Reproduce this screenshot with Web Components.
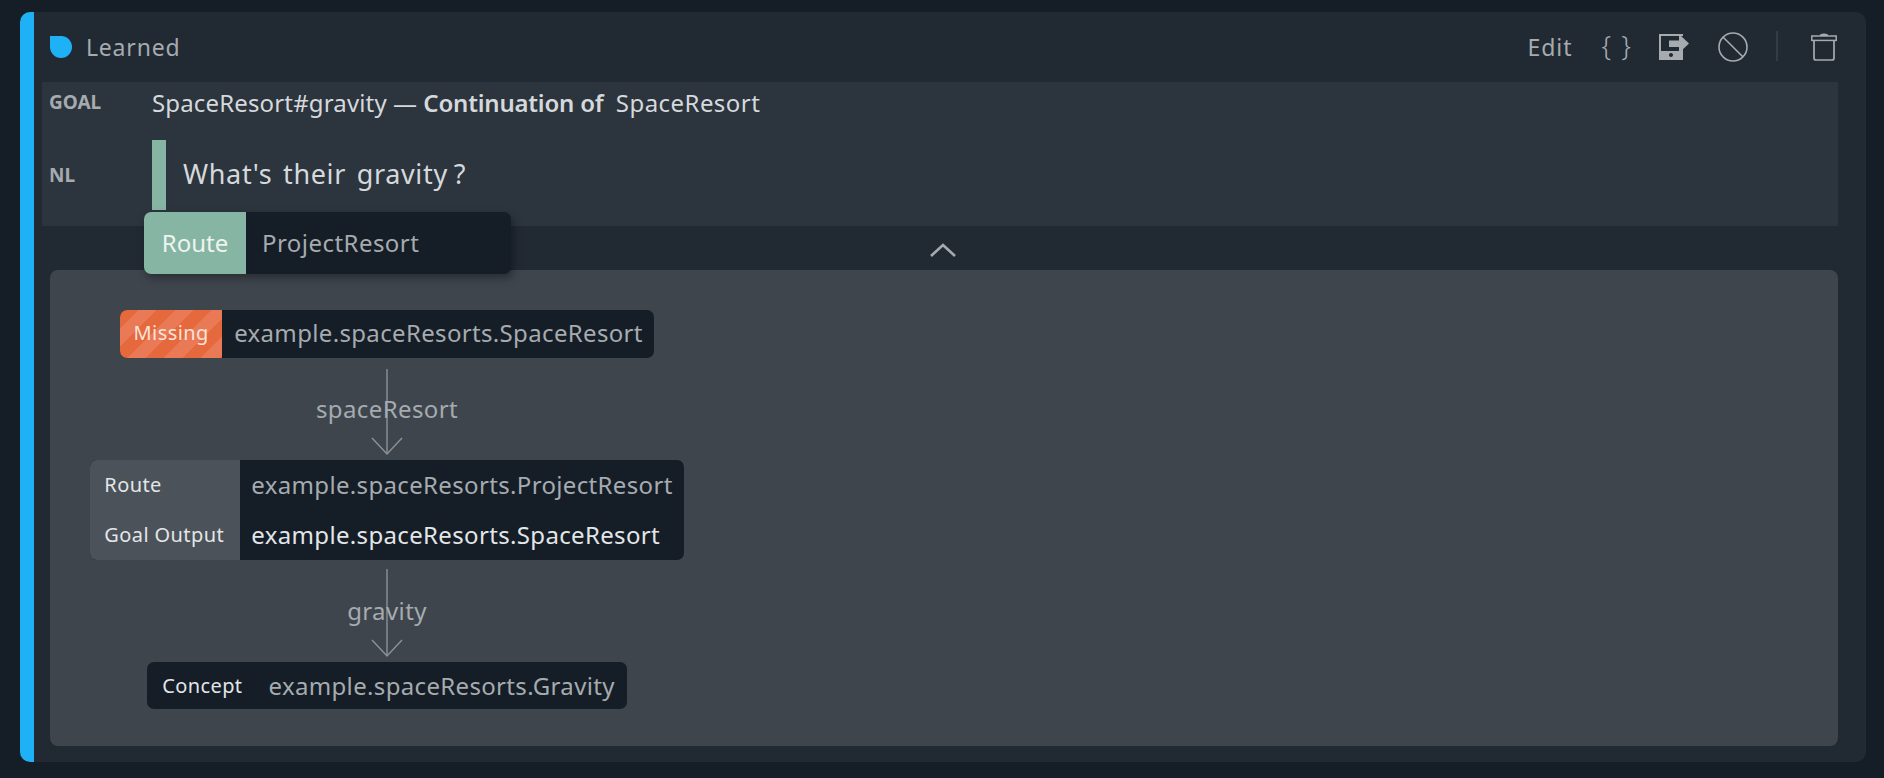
<!DOCTYPE html>
<html>
<head>
<meta charset="utf-8">
<title>Learned</title>
<style>
    html, body { margin: 0; padding: 0; height: 100%; background: #151D27; overflow: hidden; }
    body { padding: 12px 18px 16px 20px; box-sizing: border-box; font-family: "Noto Sans", "Open Sans", sans-serif; }
</style>
</head>
<body>
<story-card>
    <card-header slot="header"></card-header>
    <goal-block slot="goal" goal="SpaceResort#gravity" parent="SpaceResort" utterance="What's their gravity">
        <route-pill label="Route" value="ProjectResort"></route-pill>
    </goal-block>
    <flow-panel slot="flow">
        <flow-node kind="missing">
            <node-row label="Missing" value="example.spaceResorts.SpaceResort"></node-row>
        </flow-node>
        <flow-edge label="spaceResort" start="11"></flow-edge>
        <flow-node kind="route">
            <node-row label="Route" value="example.spaceResorts.ProjectResort"></node-row>
            <node-row label="Goal Output" value="example.spaceResorts.SpaceResort" bright></node-row>
        </flow-node>
        <flow-edge label="gravity" start="9"></flow-edge>
        <flow-node kind="concept">
            <node-row label="Concept" value="example.spaceResorts.Gravity"></node-row>
        </flow-node>
    </flow-panel>
</story-card>

<script>
class StoryCard extends HTMLElement {
    constructor() {
        super();
        this._shadow = this.attachShadow({mode: "open"});
    }
    connectedCallback() {
        this._shadow.innerHTML = `
            <slot name="header"></slot>
            <div class="inner">
                <slot name="goal"></slot>
                <div class="collapse">
                    <svg width="28" height="16" viewBox="0 0 28 16"><path d="M2 14 L14 3 L26 14" fill="none" stroke="#A5ABAF" stroke-width="2.6"/></svg>
                </div>
                <slot name="flow"></slot>
            </div>
            <style>
                :host {
                    display: flex;
                    flex-direction: column;
                    height: 750px;
                    box-sizing: border-box;
                    background: #212932;
                    border-left: 14px solid #1FB1F6;
                    border-radius: 10px;
                    padding: 0 28px 16px 8px;
                }
                .collapse {
                    height: 44px;
                    display: flex;
                    justify-content: center;
                    align-items: flex-end;
                    padding: 0 0 12px 6px;
                    box-sizing: border-box;
                }
            </style>
        `;
    }
}
customElements.define("story-card", StoryCard);

class CardHeader extends HTMLElement {
    constructor() {
        super();
        this._shadow = this.attachShadow({mode: "open"});
    }
    connectedCallback() {
        this._shadow.innerHTML = `
            <span class="dot"></span>
            <span class="status">Learned</span>
            <span class="edit">Edit</span>
            <span class="braces">{ }</span>
            <svg class="export" width="30" height="26" viewBox="0 0 30 26" fill="#A5ABAF">
                <path fill-rule="evenodd" d="M0 0 H24 V2 H2 V17 H22 V13.5 H24 V26 H0 Z M12 19 a2 2 0 1 0 0.01 0 Z"/>
                <path d="M10 6.5 H20 V0 L30 9.5 L20 19 V13 H10 Z"/>
            </svg>
            <svg class="ban" width="30" height="30" viewBox="0 0 30 30" fill="none" stroke="#A5ABAF" stroke-width="1.6">
                <circle cx="15" cy="15" r="14"/>
                <path d="M5.2 5.2 L24.8 24.8"/>
            </svg>
            <span class="divider"></span>
            <svg class="trash" width="26" height="28" viewBox="0 0 26 28" fill="none" stroke="#A5ABAF">
                <path d="M9 1.5 Q13 -0.5 17 1.5 V3 H9 Z" fill="#A5ABAF" stroke="none"/>
                <rect x="0.8" y="3" width="24.4" height="4.4" stroke-width="1.5"/>
                <path d="M3 7.4 V25 Q3 27 5 27 H21 Q23 27 23 25 V7.4" stroke-width="1.7"/>
            </svg>
            <style>
                :host {
                    display: flex;
                    align-items: center;
                    height: 70px;
                    padding: 0 1px 0 8px;
                    color: #A5ABAF;
                    font-size: 23px;
                }
                .dot {
                    width: 22px;
                    height: 22px;
                    background: #1FB1F6;
                    border-radius: 0 50% 50% 50%;
                    margin-right: 14px;
                }
                .status { flex: 1; letter-spacing: 0.8px; }
                .edit { letter-spacing: 1px; margin-right: 29px; }
                .braces { font-size: 27px; font-weight: 300; margin-right: 28px; word-spacing: 3px; margin-top: -4px; }
                .export { margin-right: 29px; }
                .divider { width: 2px; height: 30px; background: #333B44; margin: -2px 33px 0 28px; }
            </style>
        `;
    }
}
customElements.define("card-header", CardHeader);

class GoalBlock extends HTMLElement {
    constructor() {
        super();
        this._shadow = this.attachShadow({mode: "open"});
    }
    connectedCallback() {
        this._shadow.innerHTML = `
            <div class="row goal">
                <span class="key">GOAL</span>
                <span class="text"><span class="id">${this.getAttribute("goal")}</span> — <b>Continuation of</b> <span class="parent">${this.getAttribute("parent")}</span></span>
            </div>
            <div class="row nl">
                <span class="key">NL</span>
                <span class="bar"></span>
                <span class="utterance">${this.getAttribute("utterance")}<span class="mark">?</span></span>
            </div>
            <slot></slot>
            <style>
                :host {
                    display: block;
                    position: relative;
                    height: 144px;
                    background: #2C343D;
                    color: #D5D9DC;
                }
                .row { display: flex; align-items: center; }
                .goal { height: 40px; margin-bottom: 18px; }
                .nl { height: 70px; }
                .key {
                    width: 110px;
                    flex: none;
                    box-sizing: border-box;
                    padding-left: 7px;
                    font-size: 19px;
                    font-weight: 700;
                    color: #A5ABAF;
                }
                .text { font-size: 24px; }
                .id { letter-spacing: 0.15px; }
                .text b { font-weight: 600; letter-spacing: -0.2px; margin-right: 6px; }
                .parent { letter-spacing: 0.45px; }
                .bar { width: 14px; height: 70px; background: #87B5A4; flex: none; }
                .utterance { font-size: 27px; margin-left: 17px; padding-bottom: 4px; letter-spacing: 0.65px; word-spacing: 3px; }
                .mark { margin-left: 6px; }
            </style>
        `;
    }
}
customElements.define("goal-block", GoalBlock);

class RoutePill extends HTMLElement {
    constructor() {
        super();
        this._shadow = this.attachShadow({mode: "open"});
    }
    connectedCallback() {
        this._shadow.innerHTML = `
            <span class="label">${this.getAttribute("label")}</span>
            <span class="value">${this.getAttribute("value")}</span>
            <style>
                :host {
                    position: absolute;
                    left: 102px;
                    top: 130px;
                    width: 367px;
                    height: 62px;
                    display: flex;
                    background: #151D27;
                    border-radius: 7px;
                    overflow: hidden;
                    font-size: 24px;
                    box-shadow: 2px 4px 8px rgba(0, 0, 0, 0.35);
                }
                span { padding-bottom: 2px; box-sizing: border-box; }
                .label {
                    width: 102px;
                    background: #87B5A4;
                    color: #EEF4F1;
                    display: flex;
                    align-items: center;
                    justify-content: center;
                }
                .value { display: flex; align-items: center; padding-left: 16px; color: #A5ABAF; letter-spacing: 0.45px; }
            </style>
        `;
    }
}
customElements.define("route-pill", RoutePill);

class FlowPanel extends HTMLElement {
    constructor() {
        super();
        this._shadow = this.attachShadow({mode: "open"});
    }
    connectedCallback() {
        this._shadow.innerHTML = `
            <div class="column"><slot></slot></div>
            <style>
                :host {
                    display: block;
                    height: 476px;
                    box-sizing: border-box;
                    margin-left: 8px;
                    padding: 40px 0 0 40px;
                    background: #3E454D;
                    border-radius: 8px;
                }
                .column {
                    display: flex;
                    flex-direction: column;
                    align-items: center;
                    width: 594px;
                }
            </style>
        `;
    }
}
customElements.define("flow-panel", FlowPanel);

class FlowNode extends HTMLElement {
    constructor() {
        super();
        this._shadow = this.attachShadow({mode: "open"});
    }
    connectedCallback() {
        this._shadow.innerHTML = `
            <slot></slot>
            <style>
                :host {
                    display: grid;
                    grid-template-columns: auto auto;
                    background: #151D27;
                    border-radius: 7px;
                    overflow: hidden;
                }
            </style>
        `;
    }
}
customElements.define("flow-node", FlowNode);

class NodeRow extends HTMLElement {
    constructor() {
        super();
        this._shadow = this.attachShadow({mode: "open"});
    }
    connectedCallback() {
        const kind = this.parentElement.getAttribute("kind");
        this.setAttribute("kind", kind);
        this._shadow.innerHTML = `
            <span class="label">${this.getAttribute("label")}</span>
            <span class="value">${this.getAttribute("value")}</span>
            <style>
                :host { display: grid; grid-template-columns: subgrid; grid-column: 1 / 3; }
                span { display: flex; align-items: center; box-sizing: border-box; }
                .label { font-size: 20px; color: #E3E6E8; letter-spacing: 0.4px; }
                .value { font-size: 24px; color: #A5ABAF; letter-spacing: 0.34px; }
                :host([bright]) .value { color: #E3E6E8; }

                :host([kind="missing"]) { height: 48px; }
                :host([kind="missing"]) .label {
                    width: 102px;
                    justify-content: center;
                    padding-bottom: 3px;
                    color: #FBE3DA;
                    background: repeating-linear-gradient(135deg, #E5693D 0 13px, #E97A55 13px 26px);
                }
                :host([kind="missing"]) .value { padding: 0 11px 3px 12px; }

                :host([kind="route"]) { height: 50px; }
                :host([kind="route"]) .label { width: 150px; padding: 0 0 2px 14px; background: #4B5259; }
                :host([kind="route"]) .value { padding: 0 11px 1px; }

                :host([kind="concept"]) { height: 47px; }
                :host([kind="concept"]) .label { padding: 0 14px 0 15px; }
                :host([kind="concept"]) .value { padding: 0 12px; }
            </style>
        `;
    }
}
customElements.define("node-row", NodeRow);

class FlowEdge extends HTMLElement {
    constructor() {
        super();
        this._shadow = this.attachShadow({mode: "open"});
    }
    connectedCallback() {
        this._shadow.innerHTML = `
            <svg width="32" height="102" viewBox="0 0 32 102" fill="none" stroke="#8D9297" stroke-width="1.4">
                <path d="M16 ${this.getAttribute("start")} V95"/>
                <path d="M1 80 L16 96 L31 80"/>
            </svg>
            <span>${this.getAttribute("label")}</span>
            <style>
                :host { display: grid; place-items: center; height: 102px; color: #A5ABAF; font-size: 24px; letter-spacing: 0.4px; }
                svg, span { grid-area: 1 / 1; }
                span { margin-bottom: 2px; }
            </style>
        `;
    }
}
customElements.define("flow-edge", FlowEdge);
</script>
</body>
</html>
